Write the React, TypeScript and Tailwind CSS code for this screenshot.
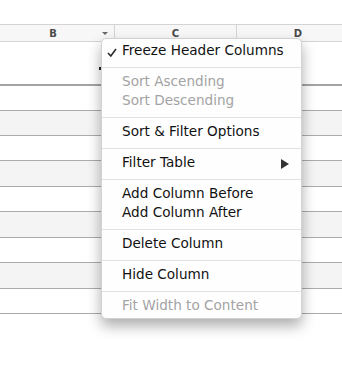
import React from "react";

type Item = { label: string; disabled?: boolean; checked?: boolean; submenu?: boolean };

const GROUPS: Item[][] = [
  [{ label: "Freeze Header Columns", checked: true }],
  [
    { label: "Sort Ascending", disabled: true },
    { label: "Sort Descending", disabled: true },
  ],
  [{ label: "Sort & Filter Options" }],
  [{ label: "Filter Table", submenu: true }],
  [{ label: "Add Column Before" }, { label: "Add Column After" }],
  [{ label: "Delete Column" }],
  [{ label: "Hide Column" }],
  [{ label: "Fit Width to Content", disabled: true }],
];

// content heights of body rows (each gets a 1px bottom line)
const ROWS = [24, 24, 24, 25, 24, 25, 24, 25, 24];

const ROW_H: Record<number, string> = {
  24: "h-[25px]",
  25: "h-[26px]",
};

function Check() {
  return (
    <svg width="10" height="9" viewBox="0 0 10 9" className="mt-[3px]">
      <path d="M1 5 L3.8 8 L9 1" fill="none" stroke="#2a2a2a" strokeWidth="1.6" />
    </svg>
  );
}

export default function App() {
  return (
    <div
      className="relative h-[370px] w-[342px] overflow-hidden bg-white"
      style={{ fontFamily: '"DejaVu Sans", "Liberation Sans", sans-serif' }}
    >
      <div className="h-6" />

      {/* column header */}
      <div className="flex h-[18px] border-y border-[#d4d4d4] bg-[#f7f7f7] text-[10px] font-bold leading-[17px] text-[#4a4a4a]">
        <div className="flex w-[115px] shrink-0 items-center border-r border-[#d4d4d4] pl-[4px] pr-[6px]">
          <span className="flex-1 text-center">B</span>
          <span className="h-0 w-0 border-x-[3px] border-t-[3px] border-x-transparent border-t-[#666]" />
        </div>
        <div className="w-[122px] shrink-0 border-r border-[#d4d4d4] text-center">C</div>
        <div className="w-[122px] shrink-0 text-center">D</div>
      </div>

      {/* table body */}
      <div className="relative h-[44px] border-b-2 border-[#a3a3a3]">
        <span className="absolute left-[99px] top-[25px] h-[3px] w-[2px] bg-[#222]" />
      </div>
      {ROWS.map((h, i) => (
        <div
          key={i}
          className={`${ROW_H[h]} border-b border-[#ababab] ${i % 2 === 1 ? "bg-[#f4f4f4]" : "bg-white"}`}
        />
      ))}

      {/* context menu */}
      <div className="absolute left-[101px] top-[38px] w-[201px] rounded-[5px] border border-[#d2d2d2] bg-[#fefefe] pb-[2px] pt-[3px] text-[13.6px] shadow-[0_7px_14px_rgba(0,0,0,0.32)]">
        {GROUPS.map((group, gi) => (
          <div key={gi}>
            {gi > 0 && <div className="mb-[5px] mt-[6px] h-px bg-[#e2e2e2]" />}
            {group.map((item) => (
              <div
                key={item.label}
                className={`flex h-[19px] items-center whitespace-nowrap pb-[2px] pr-[12px] leading-[17px] ${
                  item.disabled ? "text-[#a3a3a3]" : "text-[#111]"
                }`}
              >
                <span className="w-[20px] shrink-0 pl-[5px]">
                  {item.checked && <Check />}
                </span>
                <span className="flex-1">{item.label}</span>
                {item.submenu && (
                  <span className="mt-[2px] h-0 w-0 border-y-[5px] border-l-[8px] border-y-transparent border-l-[#333]" />
                )}
              </div>
            ))}
          </div>
        ))}
      </div>
    </div>
  );
}
